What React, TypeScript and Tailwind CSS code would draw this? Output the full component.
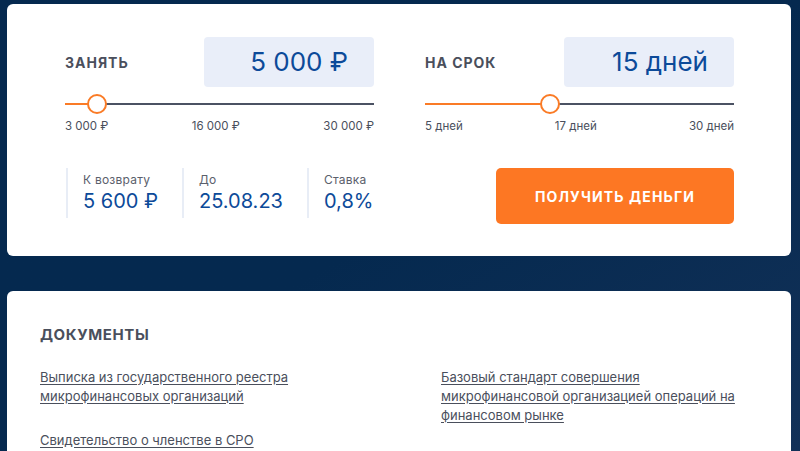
import type { ReactNode } from 'react';

const FONT = { fontFamily: 'Inter, "Noto Sans", sans-serif' };

function Slider({ percent }: { percent: number }) {
  return (
    <div className="relative h-5 flex items-center">
      <div className="h-[2px] w-full bg-[#4b5263]" />
      <div
        className="absolute left-0 top-[9px] h-[2px] bg-[#fa7b26]"
        style={{ width: `${percent}%` }}
      />
      <div
        className="absolute top-0 w-5 h-5 -ml-2.5 rounded-full border-2 border-[#fa7b26] bg-white"
        style={{ left: `${percent}%` }}
      />
    </div>
  );
}

function Picker({
  label,
  value,
  percent,
  ticks,
}: {
  label: string;
  value: string;
  percent: number;
  ticks: [string, string, string];
}) {
  return (
    <div className="w-[309px]">
      <div className="flex items-center justify-between">
        <span className="text-[14px] font-bold tracking-[0.07em] text-[#4a4f5c]">{label}</span>
        <div className="w-[170px] h-[50px] rounded-[4px] bg-[#e9eef9] flex items-center justify-end pr-[26px]">
          <span className="text-[26px] leading-none text-[#0c4a99]">{value}</span>
        </div>
      </div>
      <div className="mt-[7px]">
        <Slider percent={percent} />
      </div>
      <div className="mt-[4px] flex justify-between text-[11.5px] text-[#4a4f5c]">
        <span>{ticks[0]}</span>
        <span>{ticks[1]}</span>
        <span>{ticks[2]}</span>
      </div>
    </div>
  );
}

function Stat({ label, children }: { label: string; children: ReactNode }) {
  return (
    <div className="border-l-2 border-[#e8edf6] pl-[15px] h-[50px] flex flex-col justify-center">
      <div className="text-[12px] leading-[16px] text-[#5b606c] tracking-[0.02em]">{label}</div>
      <div className="text-[20px] leading-[26px] text-[#0c4a99]">{children}</div>
    </div>
  );
}

function DocLink({ children }: { children: ReactNode }) {
  return (
    <a className="block text-[13px] leading-[19px] text-[#4a4f5c] underline underline-offset-2 decoration-[#4a4f5c]">
      {children}
    </a>
  );
}

export default function App() {
  return (
    <div
      className="w-[800px] h-[451px] overflow-hidden bg-gradient-to-br from-[#05294f] via-[#05294f] to-[#123158] pl-[7px] pr-[9px] pt-[4px]"
      style={FONT}
    >
      <div className="bg-white rounded-[6px] h-[252px] pl-[58px] pr-[57px] pt-[33px]">
        <div className="flex justify-between">
          <Picker
            label="ЗАНЯТЬ"
            value="5 000 ₽"
            percent={10.4}
            ticks={['3 000 ₽', '16 000 ₽', '30 000 ₽']}
          />
          <Picker
            label="НА СРОК"
            value="15 дней"
            percent={40.5}
            ticks={['5 дней', '17 дней', '30 дней']}
          />
        </div>
        <div className="mt-[33px] flex items-start justify-between">
          <div className="flex ml-[1px]">
            <div className="w-[116px]">
              <Stat label="К возврату">5 600 ₽</Stat>
            </div>
            <div className="w-[125px]">
              <Stat label="До">25.08.23</Stat>
            </div>
            <div className="w-[120px]">
              <Stat label="Ставка">0,8%</Stat>
            </div>
          </div>
          <button
            type="button"
            className="w-[238px] h-[56px] rounded-[5px] bg-[#fd7723] text-white text-[14px] font-bold tracking-[0.08em]"
          >
            ПОЛУЧИТЬ ДЕНЬГИ
          </button>
        </div>
      </div>

      <div className="mt-[35px] bg-white rounded-[6px] h-[200px] pl-[33px] pt-[33px]">
        <h2 className="text-[15px] font-bold tracking-[0.04em] text-[#4a4f5c]">ДОКУМЕНТЫ</h2>
        <div className="mt-[21px] grid grid-cols-[401px_300px]">
          <div className="flex flex-col gap-[25px]">
            <DocLink>
              Выписка из государственного реестра
              <br />
              микрофинансовых организаций
            </DocLink>
            <DocLink>Свидетельство о членстве в СРО</DocLink>
          </div>
          <div>
            <DocLink>
              Базовый стандарт совершения
              <br />
              микрофинансовой организацией операций на
              <br />
              финансовом рынке
            </DocLink>
          </div>
        </div>
      </div>
    </div>
  );
}
